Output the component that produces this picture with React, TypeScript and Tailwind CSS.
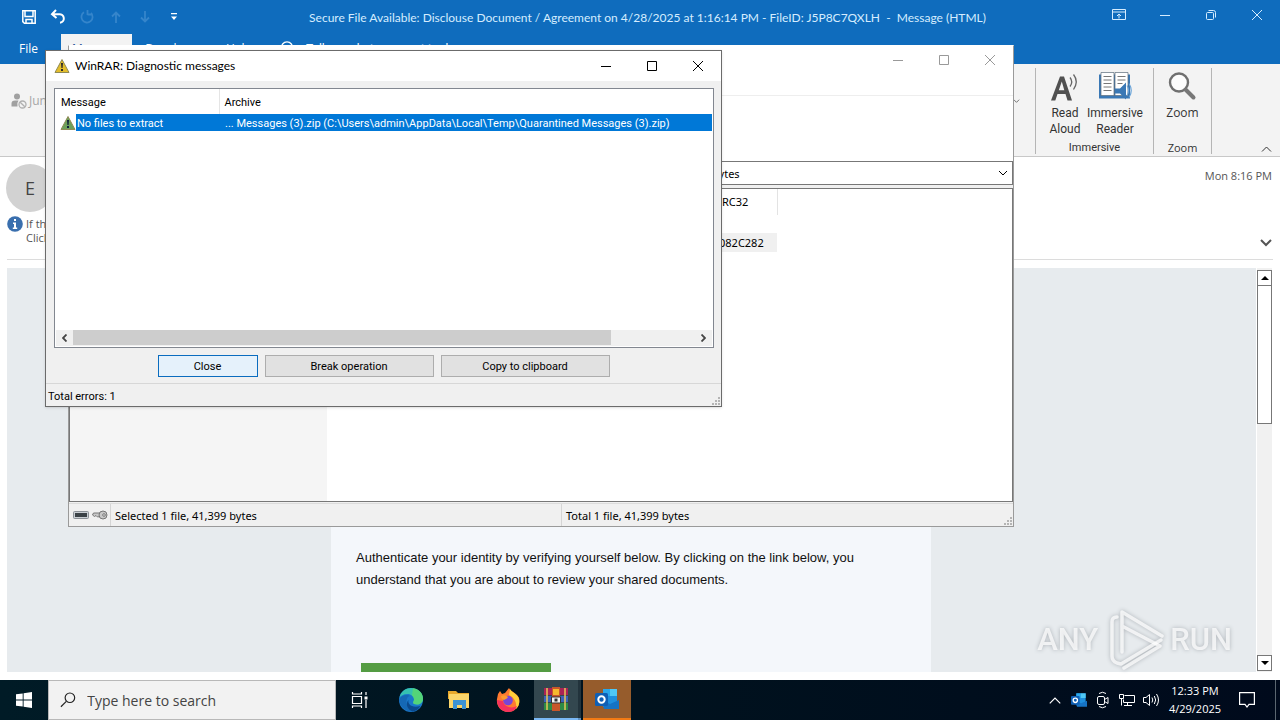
import React from "react";

type IconProps = { className?: string };

const uiFont = "font-['Open_Sans','Noto_Sans',sans-serif]";
const statusFont = "font-['Noto_Sans','Open_Sans',sans-serif]";
const compactFont = "font-['Roboto','Open_Sans',sans-serif]";
const titleFont = "font-['Lato','Open_Sans',sans-serif]";

/* ---------- small shared icons ---------- */

const ChevronDown: React.FC<IconProps> = ({ className }) => (
  <svg viewBox="0 0 10 6" className={className} fill="none" stroke="currentColor">
    <path d="M1 1l4 4 4-4" />
  </svg>
);

const ChevronUp: React.FC<IconProps> = ({ className }) => (
  <svg viewBox="0 0 10 6" className={className} fill="none" stroke="currentColor">
    <path d="M0.5 5.5L5 1l4.5 4.5" />
  </svg>
);

const MinimizeIcon: React.FC<IconProps> = ({ className }) => (
  <svg viewBox="0 0 10 10" className={className} stroke="currentColor">
    <path d="M0 5.5h10" />
  </svg>
);

const MaximizeIcon: React.FC<IconProps> = ({ className }) => (
  <svg viewBox="0 0 10 10" className={className} fill="none" stroke="currentColor">
    <path d="M0.5 0.5h9v9h-9z" />
  </svg>
);

const RestoreIcon: React.FC<IconProps> = ({ className }) => (
  <svg viewBox="0 0 10 10" className={className} fill="none" stroke="currentColor">
    <rect x="0.5" y="2.5" width="7" height="7" rx="1" />
    <path d="M2.5 0.5h5a2 2 0 0 1 2 2v5" />
  </svg>
);

const CloseIcon: React.FC<IconProps> = ({ className }) => (
  <svg viewBox="0 0 10 10" className={className} stroke="currentColor">
    <path d="M0 0l10 10M10 0L0 10" />
  </svg>
);

const WarningIcon: React.FC<IconProps & { fill: string; mark: string }> = ({ className, fill, mark }) => (
  <svg viewBox="0 0 16 16" className={className}>
    <path d="M8 1.5L15 14.5H1z" fill={fill} stroke="#8f8a55" strokeLinejoin="round" />
    <path d="M7 5h2l-0.4 5H7.4z" fill={mark} />
    <rect x="7" y="11" width="2" height="2" fill={mark} />
  </svg>
);

const SizeGrip = () => (
  <svg viewBox="0 0 9 9" className="h-[9px] w-[9px]" fill="#b4b4b4">
    <path d="M6 0h2v2H6zM6 3h2v2H6zM6 6h2v2H6zM3 3h2v2H3zM3 6h2v2H3zM0 6h2v2H0z" />
  </svg>
);

/* ---------- Outlook window ---------- */

const QuickAccess = () => (
  <div className="flex flex-1 items-center pl-[15px] text-white">
    <button aria-label="Save" className="flex h-8 w-7 items-center justify-center">
      <svg viewBox="0 0 16 16" className="h-4 w-4" fill="none" stroke="currentColor" strokeWidth="1.5">
        <path d="M1.8 1.8h12.4v12.4H3.4L1.8 12.6z" />
        <path d="M4 2v5.5h8V2M5 14v-3.500h6V14" />
      </svg>
    </button>
    <button aria-label="Undo" className="flex h-8 w-[30px] items-center justify-center">
      <svg viewBox="0 0 16 16" className="h-4 w-4" fill="none" stroke="currentColor" strokeWidth="2">
        <path d="M6 1L2 5.2l4.500 3.8M2.500 5.2H9a4.300 4.300 0 0 1 1 8.600" />
      </svg>
    </button>
    <button aria-label="Redo" className="flex h-8 w-7 items-center justify-center text-[#3585cb]">
      <svg viewBox="0 0 16 16" className="h-4 w-4" fill="none" stroke="currentColor" strokeWidth="1.8">
        <path d="M5 3.2A5.600 5.600 0 1 0 12 4M8.500 1v5M8.500 5.500H13" />
      </svg>
    </button>
    <button aria-label="Previous item" className="flex h-8 w-[30px] items-center justify-center text-[#3585cb]">
      <svg viewBox="0 0 12 12" className="h-3 w-3" fill="none" stroke="currentColor" strokeWidth="1.8">
        <path d="M6 12V1.500M2 5.500l4-4 4 4" />
      </svg>
    </button>
    <button aria-label="Next item" className="flex h-8 w-7 items-center justify-center text-[#3585cb]">
      <svg viewBox="0 0 12 12" className="h-3 w-3" fill="none" stroke="currentColor" strokeWidth="1.8">
        <path d="M6 0v10.500M2 6.500l4 4 4-4" />
      </svg>
    </button>
    <button aria-label="Customize toolbar" className="flex h-8 w-[30px] items-center justify-center">
      <svg viewBox="0 0 8 8" className="h-2 w-2" fill="currentColor">
        <path d="M1 0h6v1.200H1zM1 3.500h6L4 7z" />
      </svg>
    </button>
  </div>
);

const TitleBar = () => (
  <header className="flex h-[34px] items-center bg-[#0f6cbd]">
    <QuickAccess />
    <h1 className={`pt-0.5 text-xs whitespace-pre text-[#d5ecff] ${titleFont}`}>
      Secure File Available: Disclouse Document / Agreement on 4/28/2025 at 1:16:14 PM - FileID: J5P8C7QXLH  -  Message (HTML)
    </h1>
    <div className="flex flex-1 justify-end self-start text-[#d5ecff]">
      <button aria-label="Ribbon display options" className="flex h-[30px] w-[46px] items-center justify-center">
        <svg viewBox="0 0 14 12" className="h-3 w-3.5" fill="none" stroke="currentColor">
          <path d="M0.500 0.500h13v10H0.500zM0.500 3h13M7 9.500V5M5 7l2-2 2 2" />
        </svg>
      </button>
      <button aria-label="Minimize" className="flex h-[30px] w-[46px] items-center justify-center">
        <MinimizeIcon className="h-2.5 w-2.5" />
      </button>
      <button aria-label="Restore" className="flex h-[30px] w-[46px] items-center justify-center">
        <RestoreIcon className="h-2.5 w-2.5" />
      </button>
      <button aria-label="Close" className="flex h-[30px] w-[46px] items-center justify-center">
        <CloseIcon className="h-2.5 w-2.5" />
      </button>
    </div>
  </header>
);

const RibbonTabs = () => (
  <nav className="flex h-[30px] items-center bg-[#0f6cbd] text-xs text-white">
    <button className="h-full w-[57px]">File</button>
    <button className="ml-1 h-full w-[71px] bg-[#f3f3f3] text-[#2b579a]">Message</button>
    <button className="h-full w-[84px]">Developer</button>
    <button className="h-full w-[46px]">Help</button>
    <button className="flex h-full items-center gap-3 pl-[18px]">
      <svg viewBox="0 0 14 18" className="h-[18px] w-3.5" fill="none" stroke="currentColor" strokeWidth="1.3">
        <path d="M4.500 12.500a5.600 5.600 0 1 1 5 0v3h-5z" />
      </svg>
      <span className={compactFont}>Tell me what you want to do</span>
    </button>
  </nav>
);

const Ribbon = () => (
  <section className="flex h-[93px] border-b border-[#c8c8c8] bg-[#f3f3f3] text-xs leading-4 text-[#333]">
    <div className="flex flex-1 items-start justify-between pt-[29px] pl-[11px]">
      <button disabled className="flex items-center gap-0.5 text-[#a6a6a6]">
        <svg viewBox="0 0 16 16" className="h-4 w-4">
          <circle cx="6" cy="3.500" r="3" fill="#a0a0a0" />
          <path d="M0.500 13.500v-3q0-3 3.500-3h3.500q-2 2.500-1 6z" fill="#a0a0a0" />
          <circle cx="11.500" cy="11.500" r="3.500" fill="none" stroke="#b0b0b0" strokeWidth="1.3" />
          <path d="M9.200 9.200l4.600 4.600" stroke="#b0b0b0" strokeWidth="1.3" />
        </svg>
        Junk
      </button>
      <ChevronDown className="mt-1.5 mr-[15px] h-1 w-[7px]" />
    </div>
    <div className="mt-1 mb-0.5 flex w-[118px] flex-col items-center border-l border-[#b5b5b5]">
      <div className={`flex flex-1 self-start pl-1 ${compactFont}`}>
        <button className="flex w-[50px] flex-col items-center">
          <svg viewBox="0 0 30 32" className="h-[37px] w-[30px]">
            <path d="M1 30L10 6h4l8 24h-4.500l-2-6.500H7.500L5.300 30zM8.800 19.800h5.500L11.800 11z" fill="#505050" />
            <path d="M20 7q3.500 4.500 0 9M23.500 4q5.500 7 0 15" fill="none" stroke="#666" strokeWidth="1.3" />
          </svg>
          Read<br />Aloud
        </button>
        <button className="flex w-[50px] flex-col items-center">
          <svg viewBox="0 0 34 32" className="h-[37px] w-[34px]">
            <path d="M1 4h31v24H1z" fill="#3a78b5" />
            <path d="M3 2h13v23H3zM17 2h13v23H17z" fill="#fff" stroke="#5b6b7a" strokeWidth="0.7" />
            <path d="M5.500 6h8M5.500 9.500h8M5.500 13h8M5.500 16.500h8M5.500 20h8M19.500 6h8M19.500 9.500h8M19.500 13h5" stroke="#777" />
            <path d="M17 18h5l6-6v17l-6-6h-5z" fill="#3a78b5" />
            <path d="M29 15q3 5 0 10M31 13q4.500 7 0 14" fill="none" stroke="#6ba4d8" strokeWidth="1.2" />
          </svg>
          Immersive<br />Reader
        </button>
      </div>
      <span className={`text-[11px] leading-3 ${compactFont}`}>Immersive</span>
    </div>
    <div className="mt-1 mb-0.5 flex w-[59px] flex-col items-center border-x border-[#b5b5b5]">
      <button className="flex flex-1 flex-col items-center">
        <svg viewBox="0 0 30 32" className="h-[37px] w-[30px]">
          <circle cx="12" cy="12" r="9" fill="#fdfdfd" stroke="#707070" strokeWidth="2.4" />
          <path d="M18.500 19l8 8" stroke="#777" strokeWidth="4" strokeLinecap="round" />
        </svg>
        Zoom
      </button>
      <span className="text-[11px] leading-3">Zoom</span>
    </div>
    <div className="flex w-[68px] items-end justify-end pr-2 pb-1">
      <button aria-label="Collapse ribbon">
        <ChevronUp className="h-1.5 w-[11px]" />
      </button>
    </div>
  </section>
);

const MessageHeader = () => (
  <section className="mx-[7px] flex h-[103px] justify-between border-b border-[#dcdcdc] text-[11px] text-[#555]">
    <div className="pt-[7px]">
      <div className="-ml-px flex h-12 w-12 items-center justify-center rounded-full bg-[#d2d2d2] text-lg text-[#444]">E</div>
      <div className="mt-1 flex gap-[3px] leading-[14px] whitespace-nowrap">
        <svg viewBox="0 0 16 16" className="h-4 w-4">
          <circle cx="8" cy="8" r="7.800" fill="#3a6fae" />
          <path d="M6 6.500h3v5h1.200V13H5.800v-1.500H7V8H6zM7 3h2v2H7z" fill="#fff" />
        </svg>
        <p className="pt-px">
          If there are problems with how this message is displayed, click here to view it in a web browser.<br />
          Click here to download pictures.
        </p>
      </div>
    </div>
    <div className="flex flex-col items-end justify-between pt-[11px] pr-px pb-3 whitespace-nowrap">
      <time>Mon 8:16 PM</time>
      <button aria-label="Expand header">
        <svg viewBox="0 0 12 8" className="h-2 w-3" fill="none" stroke="#555" strokeWidth="2">
          <path d="M1 1l5 5 5-5" />
        </svg>
      </button>
    </div>
  </section>
);

const MessageBody = () => (
  <main className="mt-2 mr-2 mb-2 ml-[7px] flex min-h-0 flex-1">
    <div className="flex flex-1 justify-center overflow-hidden bg-[#e7ebee] pr-px">
      <article className="w-[600px] bg-[#f4f7fb] px-[25px] pt-[279px]">
        <p className="font-['Liberation_Sans',Arial,sans-serif] text-[13px] leading-[22px] text-[#111]">
          Authenticate your identity by verifying yourself below. By clicking on the link below, you
          <br />
          understand that you are about to review your shared documents.
        </p>
        <a href="#review" aria-label="Review documents" className="mt-[72px] ml-[5px] block h-10 w-[190px] bg-[#549c43]" />
      </article>
    </div>
    <div className="ml-px flex w-[15px] flex-col bg-[#f1f1f1] pt-0.5 pb-px">
      <button aria-label="Scroll up" className="flex h-4 items-center justify-center border border-[#777] bg-white">
        <svg viewBox="0 0 8 4" className="h-1 w-2"><path d="M0 4l4-4 4 4z" /></svg>
      </button>
      <div className="h-[138px] border border-t-0 border-[#777] bg-white" />
      <div className="flex-1" />
      <button aria-label="Scroll down" className="flex h-4 items-center justify-center border border-[#777] bg-white">
        <svg viewBox="0 0 8 4" className="h-1 w-2"><path d="M0 0l4 4 4-4z" /></svg>
      </button>
    </div>
  </main>
);

/* ---------- WinRAR main window ---------- */

const WinRarWindow = () => (
  <section
    className={`absolute top-[45px] left-[68px] flex h-[482px] w-[946px] flex-col border border-[#9a9a9a] border-t-white bg-[#f0f0f0] text-[11px] text-black ${statusFont}`}
  >
    <div className="flex h-[50px] items-start justify-end border-b border-[#eee] bg-white text-[#999]">
      <button aria-label="Minimize" className="flex h-7 w-[46px] items-center justify-center">
        <MinimizeIcon className="h-2.5 w-2.5" />
      </button>
      <button aria-label="Maximize" className="flex h-7 w-[46px] items-center justify-center">
        <MaximizeIcon className="h-2.5 w-2.5" />
      </button>
      <button aria-label="Close" className="flex h-7 w-[46px] items-center justify-center">
        <CloseIcon className="h-2.5 w-2.5" />
      </button>
    </div>
    <div className="h-[65px] bg-white" />
    <div className="flex h-6 items-center border border-[#777] bg-white">
      <select aria-label="Archive path" className="h-full flex-1 appearance-none pt-0.5 pl-[642px] outline-none">
        <option>bytes</option>
      </select>
      <ChevronDown className="mr-1 h-1.5 w-2.5" />
    </div>
    <div className="mt-[3px] flex flex-1 border border-[#777] bg-white">
      <div className="w-[257px] bg-[#f5f5f5]" />
      <div className="flex-1">
        <table className="ml-[310px] border-collapse text-left leading-[18px]">
          <thead>
            <tr>
              <th className="h-[26px] w-[140px] border-r border-[#e3e3e3] pl-[78px] font-normal">CRC32</th>
            </tr>
          </thead>
          <tbody>
            <tr>
              <td className="h-[18px]" />
            </tr>
            <tr>
              <td className="h-[19px] bg-[#f0f0f0] pl-[82px]">082C282</td>
            </tr>
          </tbody>
        </table>
      </div>
    </div>
    <footer className="mt-px flex h-[23px] items-center border-t border-[#dcdcdc]">
      <div className="flex h-full w-[42px] items-center gap-[3px] border-r border-[#d5d5d5] pl-1">
        <svg viewBox="0 0 16 8" className="h-2 w-4">
          <rect x="0.500" y="0.500" width="15" height="7" rx="1" fill="#c9ced3" stroke="#8b9197" />
          <rect x="2" y="2" width="12" height="4" fill="#3b4247" />
        </svg>
        <svg viewBox="0 0 16 10" className="h-2.5 w-4" fill="#c8c8c8" stroke="#777">
          <path d="M8 3H1.500L0.500 5l2 1.500L4 5.500 5.500 7 8 6.500" />
          <circle cx="11" cy="5" r="4" />
          <circle cx="12" cy="5" r="1.300" fill="#eee" />
        </svg>
      </div>
      <span className="h-full w-[451px] border-r border-[#d5d5d5] pl-1 leading-6">Selected 1 file, 41,399 bytes</span>
      <span className="h-full flex-1 pl-1 leading-6">Total 1 file, 41,399 bytes</span>
      <div className="self-end"><SizeGrip /></div>
    </footer>
  </section>
);

/* ---------- Diagnostic messages dialog ---------- */

const DiagnosticDialog = () => (
  <section
    role="dialog"
    aria-labelledby="diag-title"
    className={`absolute top-[50px] left-[45px] flex h-[357px] w-[677px] flex-col border border-[#6b6b6b] bg-[#f0f0f0] text-[11px] text-black shadow-sm ${compactFont}`}
  >
    <div className="flex h-[30px] items-center bg-white pl-2">
      <WarningIcon className="h-4 w-4" fill="#e3bd2c" mark="#2b2b2b" />
      <h2 id="diag-title" className={`ml-[5px] flex-1 text-xs ${titleFont}`}>WinRAR: Diagnostic messages</h2>
      <button aria-label="Minimize" className="flex h-full w-[46px] items-center justify-center">
        <MinimizeIcon className="h-2.5 w-2.5" />
      </button>
      <button aria-label="Maximize" className="flex h-full w-[46px] items-center justify-center">
        <MaximizeIcon className="h-2.5 w-2.5" />
      </button>
      <button aria-label="Close" className="flex h-full w-[46px] items-center justify-center">
        <CloseIcon className="h-2.5 w-2.5" />
      </button>
    </div>

    <div className="mt-[7px] mr-[7px] ml-2 flex h-[260px] flex-col border border-[#828790] bg-white px-px">
      <table className="w-full table-fixed border-collapse text-left">
        <thead>
          <tr className="h-[25px]">
            <th className="w-[163px] border-r border-[#e5e5e5] pt-1 pl-[5px] font-normal">Message</th>
            <th className="pt-1 pl-[5px] font-normal">Archive</th>
          </tr>
        </thead>
        <tbody>
          <tr className="text-white">
            <td className="pl-1">
              <div className="flex items-center">
                <WarningIcon className="h-4 w-4" fill="#6da05a" mark="#10203a" />
                <span className="h-[17px] flex-1 bg-[#0078d7] pt-px pl-px leading-[18px]">No files to extract</span>
              </div>
            </td>
            <td>
              <div className="h-[17px] bg-[#0078d7] pt-px pl-1.5 leading-[18px] whitespace-nowrap">
                ... Messages (3).zip (C:\Users\admin\AppData\Local\Temp\Quarantined Messages (3).zip)
              </div>
            </td>
          </tr>
        </tbody>
      </table>
      <div className="flex-1" />
      <div className="mb-px flex h-4 bg-[#f0f0f0]">
        <button aria-label="Scroll left" className="flex h-full w-[17px] items-center justify-center">
          <svg viewBox="0 0 5 8" className="h-2 w-[5px]" fill="none" stroke="#444" strokeWidth="1.8"><path d="M4.500 0.500L1 4l3.500 3.500" /></svg>
        </button>
        <div className="h-[15px] w-[538px] bg-[#cdcdcd]" />
        <div className="flex-1" />
        <button aria-label="Scroll right" className="flex h-full w-[17px] items-center justify-center">
          <svg viewBox="0 0 5 8" className="h-2 w-[5px]" fill="none" stroke="#444" strokeWidth="1.8"><path d="M0.500 0.500L4 4 0.500 7.500" /></svg>
        </button>
      </div>
    </div>

    <div className="mt-[7px] flex justify-center gap-[7px]">
      <button className="h-[22px] w-[100px] border border-[#0a6cbf] bg-[#e5f1fb] pt-0.5">Close</button>
      <button className="h-[22px] w-[169px] border border-[#adadad] bg-[#e1e1e1] pt-0.5">Break operation</button>
      <button className="h-[22px] w-[169px] border border-[#adadad] bg-[#e1e1e1] pt-0.5">Copy to clipboard</button>
    </div>

    <footer className="mt-1.5 flex flex-1 items-center justify-between border-t border-[#d7d7d7] pl-0.5">
      <span className="pt-1">Total errors: 1</span>
      <div className="self-end"><SizeGrip /></div>
    </footer>
  </section>
);

/* ---------- watermark ---------- */

const Watermark = () => (
  <div className={`pointer-events-none absolute right-12 bottom-12 flex h-16 items-center text-[31px] font-medium text-white/75 drop-shadow-[0_0_2px_#9aa0a6] ${compactFont}`}>
    <span>ANY</span>
    <svg viewBox="0 0 56 64" className="mr-1 ml-3 h-16 w-14" fill="none" stroke="#fff" strokeOpacity="0.75" strokeWidth="3.5" strokeLinejoin="round" strokeLinecap="round">
      <path d="M7 9q-5 0-5 5v34q0 5 5 7l4 1 40-24" />
      <path d="M12 44V4l40 24M12 18l38 20-36 22" />
    </svg>
    <span>RUN</span>
  </div>
);

/* ---------- taskbar ---------- */

const OutlookIcon: React.FC<IconProps> = ({ className }) => (
  <svg viewBox="0 0 24 22" className={className}>
    <path d="M8 1h14v18H8z" fill="#1f8fdd" />
    <path d="M15 1h7v7h-7z" fill="#50c8f5" />
    <path d="M8 1h7v7H8z" fill="#2aa7ea" />
    <path d="M7 12l8 4 9-4v9H9z" fill="#1673c4" />
    <rect y="5" width="13" height="13" rx="1.500" fill="#0f5fb4" />
    <circle cx="6.500" cy="11.500" r="3.200" fill="none" stroke="#fff" strokeWidth="2" />
  </svg>
);

const Taskbar = () => (
  <footer className="flex h-10 bg-linear-to-r from-[#001b26] via-[#00121e] to-[#000a1c] text-white">
    <button aria-label="Start" className="flex w-12 items-center justify-center">
      <svg viewBox="0 0 16 16" className="h-4 w-4" fill="#fff">
        <path d="M0 2.300L6.700 1.400v6.200H0zM7.600 1.200L16 0v7.600H7.600zM0 8.400h6.700v6.200L0 13.700zM7.600 8.400H16V16l-8.400-1.200z" />
      </svg>
    </button>
    <label className="flex w-72 items-center border border-[#b8b8b8] bg-[#f2f2f2] pl-[11px]">
      <svg viewBox="0 0 18 18" className="h-[18px] w-[18px]" fill="none" stroke="#222" strokeWidth="1.3">
        <circle cx="11" cy="6.500" r="5.300" />
        <path d="M7 10.500L1 16.500" />
      </svg>
      <input
        aria-label="Search"
        placeholder="Type here to search"
        className="ml-[11px] w-full bg-transparent pt-0.5 text-sm outline-none placeholder:text-[#444]"
      />
    </label>
    <button aria-label="Task view" className="flex w-12 items-center justify-center">
      <svg viewBox="0 0 18 18" className="h-[18px] w-[18px]" fill="none" stroke="#fff" strokeWidth="1.2">
        <path d="M1.500 5.500h9v7h-9zM1.500 1v2h9V1M1.500 17v-2h9v2M15 1v3M15 9v8" />
        <path d="M13.500 5.500h3v3h-3z" fill="#fff" stroke="none" />
      </svg>
    </button>
    <button aria-label="Microsoft Edge" className="flex w-[53px] items-center justify-center">
      <svg viewBox="0 0 24 24" className="h-6 w-6">
        <circle cx="12" cy="12" r="12" fill="#1a78c9" />
        <path d="M0.500 9.500C2 3 7 0 12 0c7 0 12 5 12 10.500 0 4-3 6-6 6-2.500 0-4-1-4-2 0-.800 1-1.200 1-3C15 8.500 12 6 8.500 6 4.500 6 1.500 8 0.500 9.500z" fill="#35c1b1" />
        <path d="M14 0.200C20 1 24 5.500 24 10.500c0 4-3 6-6 6-2.500 0-4-1-4-2 0-.800 1-1.200 1-3 0-1.500-.500-2.500-2-4z" fill="#5bd86c" opacity="0.8" />
        <path d="M8 10.500c-2 5 1 11 7.500 13C8 25 1 19 0 12c2-5 8-6 11-4-1.500 0-2.500 1-3 2.500z" fill="#1568b5" />
        <path d="M9.500 12c-1 4 3 8.500 12 6-2 3.500-5 5-8 5.500-5-2-7.500-7.500-4-11.500z" fill="#0b4a8e" />
      </svg>
    </button>
    <button aria-label="File Explorer" className="flex w-11 items-center justify-center">
      <svg viewBox="0 0 22 20" className="h-5 w-[22px]">
        <path d="M0 1h8l2 2h11v6H0z" fill="#e8a92c" />
        <path d="M1 4h20v14H1z" fill="#fbd66b" />
        <path d="M5 10h13v9h-4v-4h-5v4H5z" fill="#3c93d5" />
      </svg>
    </button>
    <button aria-label="Firefox" className="flex w-[53px] items-center justify-center">
      <svg viewBox="0 0 24 24" className="h-6 w-6">
        <path d="M2 6l2-3 2 3 3-1 4-5c1 3 8 5 10 10 2 8-4 14-11 14S0 18 1 11z" fill="#ff7a2f" />
        <path d="M14 1c1 3 8 5 9 10 1 5-1 8-3 10 1-6-1-11-7-14z" fill="#ffcf3a" />
        <path d="M1 12c0 7 5 12 11 12 5 0 8-3 9-6-5 3-13 1-14-5z" fill="#f5315e" />
        <circle cx="12" cy="12.500" r="4.800" fill="#7a45d6" />
        <path d="M5 8c3-2 6 0 7 1-1 2-3 2-4 3-2-1-3-2-3-4z" fill="#ff9b2e" />
      </svg>
    </button>
    <button aria-label="WinRAR" className="flex w-11 items-center justify-center border-b-2 border-[#7ab8f5] bg-[#33474f]">
      <svg viewBox="0 0 24 24" className="h-6 w-6">
        <path d="M0 1h24v7H0z" fill="#a92355" />
        <path d="M0 9h24v6H0z" fill="#3b62b8" />
        <path d="M0 16h24v7H0z" fill="#2e8b45" />
        <path d="M3 1v22M21 1v22" stroke="#e8c55a" strokeWidth="1.5" />
        <path d="M8 0h8v24H8z" fill="#c8572b" />
        <path d="M9 2h6v6H9z" fill="#f5b92e" />
        <path d="M7.500 10h9v6h-9z" fill="#f4f4f4" stroke="#333" />
        <path d="M10.500 11.500h3v3h-3z" fill="#333" />
      </svg>
    </button>
    <div className="w-[3px] border-b-2 border-[#5d8fbf] bg-[#22333c]" />
    <button aria-label="Outlook" className="ml-0.5 flex w-12 items-center justify-center border-b-2 border-[#f27a14] bg-[#965c2c]">
      <OutlookIcon className="h-[22px] w-6" />
    </button>
    <div className="flex-1" />
    <button aria-label="Show hidden icons" className="flex w-6 items-center justify-center">
      <ChevronUp className="h-[7px] w-3" />
    </button>
    <button aria-label="Outlook tray" className="flex w-6 items-center justify-center">
      <OutlookIcon className="h-4 w-4" />
    </button>
    <button aria-label="Meet now" className="flex w-6 items-center justify-center">
      <svg viewBox="0 0 14 18" className="h-[18px] w-3.5" fill="none" stroke="#fff">
        <rect x="1.500" y="5.500" width="7" height="8" rx="1.500" />
        <path d="M8.500 8.500l3.500-2v6l-3.500-2M3 2.500q3.500-2.500 7 0M3 15.500q3.500 2.500 7 0" />
      </svg>
    </button>
    <button aria-label="Network" className="flex w-6 items-center justify-center">
      <svg viewBox="0 0 16 14" className="h-3.5 w-4" fill="none" stroke="#fff">
        <path d="M5.500 2.500h10v7h-11V6.500M8.500 9.500v3M5 12.500h8M0.500 1.500h4v4h-4zM2.500 5.500v7" />
      </svg>
    </button>
    <button aria-label="Volume" className="flex w-6 items-center justify-center">
      <svg viewBox="0 0 16 14" className="h-3.5 w-4" fill="none" stroke="#fff">
        <path d="M0.500 4.500h2.500l3.500-3v11L3 9.500H0.500zM9 4.500q1.500 2.500 0 5M11.300 3q2.700 4 0 8M13.500 1q4 6 0 12" />
      </svg>
    </button>
    <time className="flex w-16 flex-col items-center justify-center text-[11px] leading-[18px]">
      <span>12:33 PM</span>
      <span>4/29/2025</span>
    </time>
    <button aria-label="Notifications" className="flex w-10 items-center justify-center">
      <svg viewBox="0 0 16 16" className="h-4 w-4" fill="none" stroke="#fff" strokeWidth="1.2">
        <path d="M0.600 0.600h14.800v11.800H10L8 15l-2-2.600H0.600z" />
      </svg>
    </button>
    <div className="ml-2 w-[5px] border-l border-[#5b6670]" />
  </footer>
);

const App: React.FC = () => {
  return (
    <div className={`relative flex h-screen flex-col overflow-hidden bg-white ${uiFont}`}>
      <TitleBar />
      <RibbonTabs />
      <Ribbon />
      <MessageHeader />
      <MessageBody />
      <Taskbar />
      <Watermark />
      <WinRarWindow />
      <DiagnosticDialog />
    </div>
  );
};

export default App;
